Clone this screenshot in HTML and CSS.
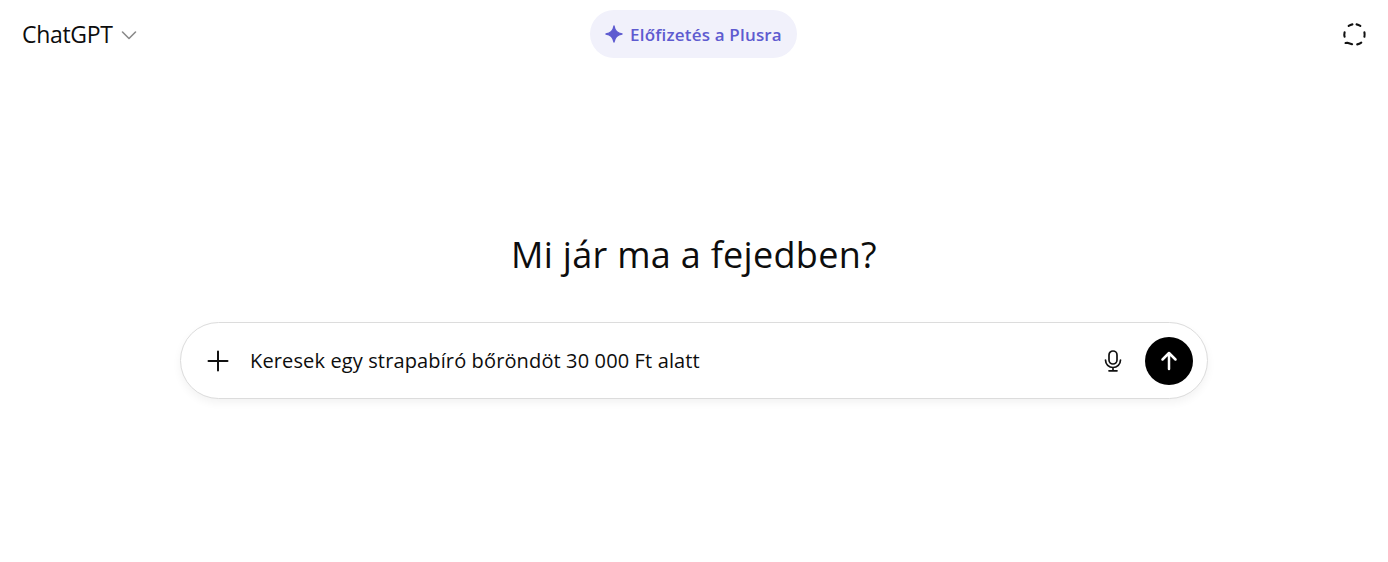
FILE: index.html
```html
<!DOCTYPE html>
<html lang="hu">
<head>
    <meta charset="UTF-8">
    <meta name="viewport" content="width=device-width, initial-scale=1.0">
    <title>ChatGPT</title>
    <link rel="stylesheet" href="styles.css">
</head>
<body>
    <header class="topbar">
        <div class="model-picker">
            <span class="model-name">ChatGPT</span>
            <svg class="chevron" width="16" height="16" viewBox="0 0 16 16" fill="none"><path d="M1.500 5 8 11.500 14.500 5" stroke="#8a8a8a" stroke-width="1.600" stroke-linecap="round" stroke-linejoin="round"/></svg>
        </div>
        <button class="upgrade-btn">
            <svg width="18" height="18" viewBox="0 0 18 18"><path d="M9 1c.7 4.500 3.400 7.300 8 8-4.600.7-7.300 3.500-8 8-.7-4.500-3.400-7.300-8-8 4.600-.7 7.300-3.500 8-8z" fill="#5e5bd0" stroke="#5e5bd0" stroke-width="1.400" stroke-linejoin="round"/></svg>
            <span>Előfizetés a Plusra</span>
        </button>
        <div class="topbar-right">
            <svg width="25" height="25" viewBox="0 0 24 24" fill="none"><path d="M10 2.300a9.800 9.800 0 0 0-3.600 1.500M14 2.300a9.800 9.800 0 0 1 3.600 1.500M21.500 9.800c.3 1.500.3 2.900 0 4.400M18.500 19.800a9.800 9.800 0 0 1-3.900 1.700M2.500 9.800a9.800 9.800 0 0 0 0 4.400M3.400 20.200l1.700-.3 4.600 1.500" stroke="#111" stroke-width="2" stroke-linecap="round" stroke-linejoin="round"/></svg>
        </div>
    </header>

    <main class="content">
        <h1 class="headline">Mi jár ma a fejedben?</h1>
        <div class="composer">
            <svg class="plus" width="22" height="22" viewBox="0 0 22 22" fill="none"><path d="M11 1.500v19M1.500 11h19" stroke="#111" stroke-width="2" stroke-linecap="round"/></svg>
            <div class="prompt">Keresek egy strapabíró bőröndöt 30 000 Ft alatt</div>
            <svg class="mic" width="24" height="24" viewBox="0 0 24 24" fill="none"><rect x="8" y="2" width="8" height="13" rx="4" stroke="#111" stroke-width="1.700"/><path d="M4.500 11a7.500 7.500 0 0 0 15 0M12 18.500v3M8 21.800h8" stroke="#111" stroke-width="1.700" stroke-linecap="round"/></svg>
            <button class="send-btn">
                <svg width="24" height="24" viewBox="0 0 24 24" fill="none"><path d="M12 20V4M5.500 10.500 12 4l6.500 6.500" stroke="#fff" stroke-width="2.500" stroke-linecap="round" stroke-linejoin="round"/></svg>
            </button>
        </div>
    </main>
</body>
</html>
```

FILE: styles.css
```css
body {
    font-family: "Open Sans", "Noto Sans", sans-serif;
    background: #fff;
    color: #0d0d0d;
    margin: 0;
    height: 100vh;
    overflow: hidden;
}

.topbar {
    display: grid;
    grid-template-columns: 1fr auto 1fr;
    align-items: center;
    padding: 10px 23px 0 22px;
}

.model-picker {
    display: flex;
    align-items: center;
    gap: 8px;
}

.model-name {
    font-size: 23px;
    letter-spacing: -0.3px;
}

.chevron {
    margin-top: 2px;
}

.upgrade-btn {
    display: flex;
    align-items: center;
    gap: 7px;
    height: 48px;
    width: 207px;
    justify-content: center;
    border: none;
    border-radius: 24px;
    background: #f1f1fb;
    color: #5e5bd0;
    font-family: inherit;
    font-size: 17px;
    font-weight: 600;
    letter-spacing: 0.18px;
    padding: 0;
}

.topbar-right {
    display: flex;
    justify-content: flex-end;
    margin-right: -2px;
}

.content {
    display: flex;
    flex-direction: column;
    align-items: center;
}

.headline {
    font-size: 36px;
    font-weight: 400;
    line-height: 48px;
    margin: 173px 0 43px;
    letter-spacing: 0.3px;
}

.composer {
    display: flex;
    align-items: center;
    width: 1028px;
    height: 77px;
    box-sizing: border-box;
    padding: 0 14px 0 26px;
    border: 1px solid #dcdcdc;
    border-radius: 39px;
    background: #fff;
    box-shadow: 0 4px 8px rgba(0,0,0,0.05);
}

.prompt {
    flex: 1;
    margin-left: 21px;
    font-size: 20px;
    letter-spacing: 0.13px;
}

.mic {
    margin-right: 20px;
}

.send-btn {
    display: flex;
    align-items: center;
    justify-content: center;
    width: 48px;
    height: 48px;
    padding: 0;
    border: none;
    border-radius: 50%;
    background: #000;
}
```
